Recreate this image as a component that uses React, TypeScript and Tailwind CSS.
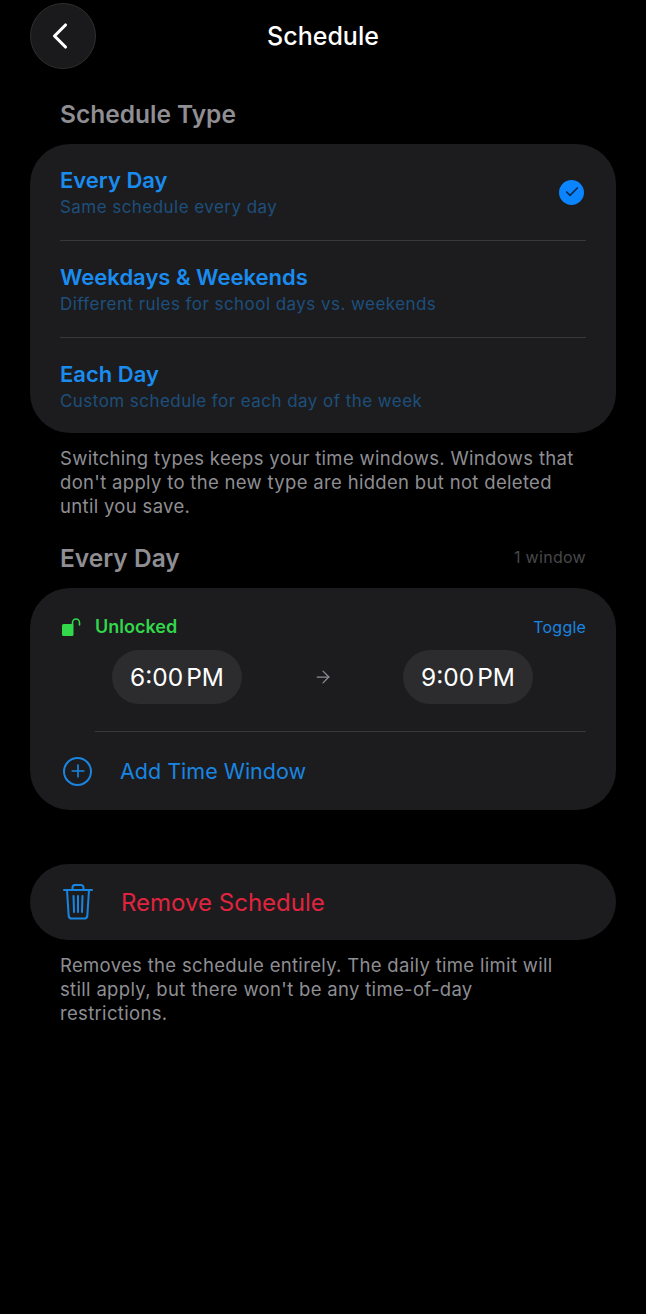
import { ArrowRight, Check, ChevronLeft, Plus } from "lucide-react";

const types = [
  { title: "Every Day", sub: "Same schedule every day", selected: true },
  { title: "Weekdays & Weekends", sub: "Different rules for school days vs. weekends" },
  { title: "Each Day", sub: "Custom schedule for each day of the week" },
];

const LockIcon = () => (
  <svg width="21" height="18" viewBox="0 0 21 18" fill="none">
    <rect x="2" y="6" width="11.500" height="12" rx="1.500" fill="#32d74b" />
    <path d="M12.500 7V4.500a3.500 3.500 0 0 1 7 0V7" stroke="#32d74b" strokeWidth="1.600" strokeLinecap="round" />
  </svg>
);

const TrashIcon = () => (
  <svg width="32" height="38" viewBox="0 0 32 38" fill="none" stroke="#1a85e0" strokeWidth="2" strokeLinecap="round" strokeLinejoin="round">
    <path d="M2 7h28" />
    <path d="M10.500 7V4.500A2.500 2.500 0 0 1 13 2h6a2.500 2.500 0 0 1 2.500 2.500V7" />
    <path d="M5 7l1.700 26a3 3 0 0 0 3 2.500h12.600a3 3 0 0 0 3-2.500L27 7" />
    <path d="M11.500 13l.5 16M16 13v16M20.500 13l-.5 16" />
  </svg>
);

const TimePill = ({ time, period }: { time: string; period: string }) => (
  <div className="flex h-[54px] w-[130px] items-center justify-center gap-[3px] rounded-full bg-[#2c2c2e] text-[24.500px] text-white">
    <span>{time}</span>
    <span>{period}</span>
  </div>
);

export default function App() {
  return (
    <div className="flex h-[1314px] w-[646px] flex-col bg-black font-['Inter',sans-serif]">
      <div className="relative ml-[30px] mt-[3px] flex h-[66px] items-center">
        <button className="flex size-[66px] items-center justify-center rounded-full border border-[#2e2e2e] bg-[#1a1a1c] text-white">
          <ChevronLeft size={44} strokeWidth={1.700} className="-ml-1.5" />
        </button>
        <h1 className="absolute left-[-30px] top-[18px] w-[646px] text-center text-[25px] leading-[30px] font-medium text-white">Schedule</h1>
      </div>

      <h2 className="ml-[60px] mt-[30px] text-[24.500px] leading-[30px] font-semibold text-[#8e8e93]">Schedule Type</h2>

      <div className="mx-[30px] mt-[15px] h-[289px] rounded-[40px] bg-[#1c1c1e] px-[30px]">
        {types.map((t, i) => (
          <div key={t.title} className={`flex items-center justify-between pr-[2px] ${i < 2 ? "h-[97px] border-b border-[#38383a]" : "h-[95px]"}`}>
            <div className="flex flex-col pt-[2px]">
              <span className="text-[22px] leading-[26px] font-semibold text-[#1a8cf0]">{t.title}</span>
              <span className="mt-[3px] text-[17px] leading-[23px] tracking-[0.450px] text-[#1d4f7c]">{t.sub}</span>
            </div>
            {t.selected && (
              <div className="flex size-[25px] items-center justify-center rounded-full bg-[#0a84ff]">
                <Check size={16} strokeWidth={2.500} className="text-[#0b2a4a]" />
              </div>
            )}
          </div>
        ))}
      </div>

      <p className="ml-[60px] mt-[13px] w-[520px] text-[18.500px] leading-[24px] tracking-[0.320px] text-[#8e8e93]">
        Switching types keeps your time windows. Windows that don't apply to the new type are hidden but not deleted until you save.
      </p>

      <div className="mx-[60px] mt-[25px] flex items-center justify-between">
        <h2 className="text-[24.500px] leading-[30px] font-semibold text-[#8e8e93]">Every Day</h2>
        <span className="mb-[2px] text-[16px] tracking-[0.300px] text-[#48484a]">1 window</span>
      </div>

      <div className="mx-[30px] mt-[15px] h-[222px] rounded-[40px] bg-[#1c1c1e] px-[30px]">
        <div className="flex items-center justify-between pt-[27px]">
          <div className="flex items-center gap-[14px]">
            <LockIcon />
            <span className="text-[18px] leading-[24px] font-semibold text-[#32d74b]">Unlocked</span>
          </div>
          <span className="text-[16px] leading-[24px] tracking-[0.200px] text-[#1a85e0]">Toggle</span>
        </div>
        <div className="mt-[11px] flex items-center justify-between pl-[52px] pr-[53px]">
          <TimePill time="6:00" period="PM" />
          <ArrowRight size={20} strokeWidth={1.500} className="text-[#8e8e93]" />
          <TimePill time="9:00" period="PM" />
        </div>
        <div className="ml-[35px] mt-[27px] border-t border-[#38383a]" />
        <div className="flex h-[78px] items-center gap-[28px] pl-[3px]">
          <div className="flex size-[29px] items-center justify-center rounded-full border-2 border-[#1a85e0]">
            <Plus size={20} strokeWidth={2} className="text-[#1a85e0]" />
          </div>
          <span className="text-[21.500px] text-[#1a85e0]">Add Time Window</span>
        </div>
      </div>

      <div className="mx-[30px] mt-[54px] flex h-[76px] items-center gap-[27px] rounded-full bg-[#1c1c1e] pl-[32px]">
        <TrashIcon />
        <span className="pt-[2px] text-[24px] text-[#e0243f]">Remove Schedule</span>
      </div>

      <p className="ml-[60px] mt-[13px] w-[500px] text-[18.500px] leading-[24px] tracking-[0.320px] text-[#8e8e93]">
        Removes the schedule entirely. The daily time limit will still apply, but there won't be any time-of-day restrictions.
      </p>
    </div>
  );
}
